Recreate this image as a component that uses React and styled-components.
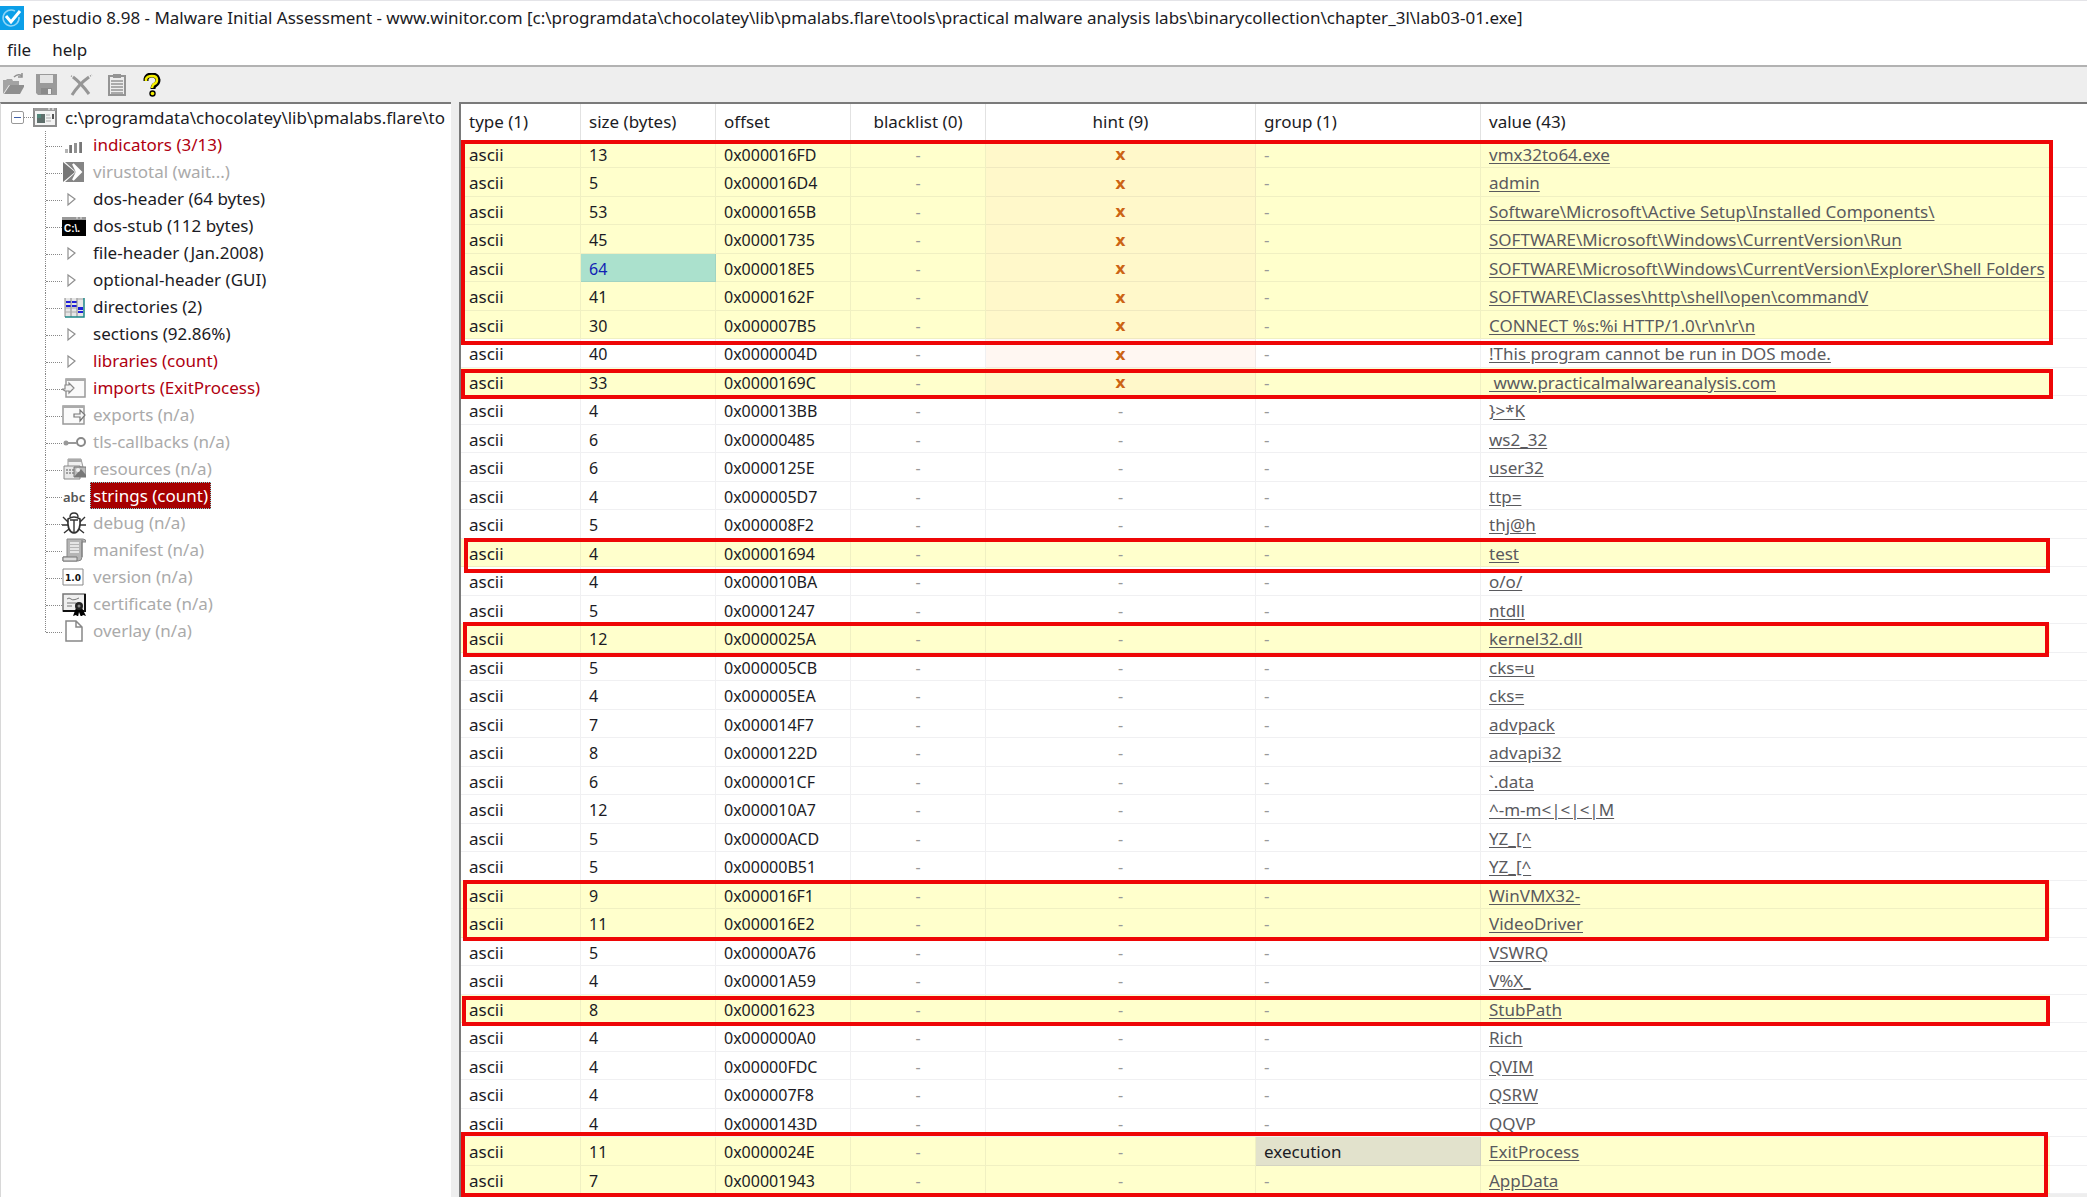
import React from "react";
import styled, { createGlobalStyle } from "styled-components";

const frames = [
  { top: 36, height: 205, left: 0, right: 34 },
  { top: 265, height: 30, left: 0, right: 34 },
  { top: 434, height: 35, left: 3, right: 37 },
  { top: 518, height: 35, left: 2, right: 38 },
  { top: 776, height: 61, left: 2, right: 38 },
  { top: 892, height: 30, left: 1, right: 37 },
  { top: 1028, height: 65, left: 0, right: 39 },
];

const columns = [
  { label: "type (1)", width: 120 },
  { label: "size (bytes)", width: 135 },
  { label: "offset", width: 135 },
  { label: "blacklist (0)", width: 135, center: true },
  { label: "hint (9)", width: 270, center: true },
  { label: "group (1)", width: 225 },
  { label: "value (43)" },
];

// size, offset, value, flags: m = marked, h = hint
const strings = [
  [13, "0x000016FD", "vmx32to64.exe", "mh"],
  [5, "0x000016D4", "admin", "mh"],
  [53, "0x0000165B", "Software\\Microsoft\\Active Setup\\Installed Components\\", "mh"],
  [45, "0x00001735", "SOFTWARE\\Microsoft\\Windows\\CurrentVersion\\Run", "mh"],
  [64, "0x000018E5", "SOFTWARE\\Microsoft\\Windows\\CurrentVersion\\Explorer\\Shell Folders", "mh"],
  [41, "0x0000162F", "SOFTWARE\\Classes\\http\\shell\\open\\commandV", "mh"],
  [30, "0x000007B5", "CONNECT %s:%i HTTP/1.0\\r\\n\\r\\n", "mh"],
  [40, "0x0000004D", "!This program cannot be run in DOS mode.", "h"],
  [33, "0x0000169C", " www.practicalmalwareanalysis.com", "mh"],
  [4, "0x000013BB", "}>*K", ""],
  [6, "0x00000485", "ws2_32", ""],
  [6, "0x0000125E", "user32", ""],
  [4, "0x000005D7", "ttp=", ""],
  [5, "0x000008F2", "thj@h", ""],
  [4, "0x00001694", "test", "m"],
  [4, "0x000010BA", "o/o/", ""],
  [5, "0x00001247", "ntdll", ""],
  [12, "0x0000025A", "kernel32.dll", "m"],
  [5, "0x000005CB", "cks=u", ""],
  [4, "0x000005EA", "cks=", ""],
  [7, "0x000014F7", "advpack", ""],
  [8, "0x0000122D", "advapi32", ""],
  [6, "0x000001CF", "`.data", ""],
  [12, "0x000010A7", "^-m-m<|<|<|M", ""],
  [5, "0x00000ACD", "YZ_[^", ""],
  [5, "0x00000B51", "YZ_[^", ""],
  [9, "0x000016F1", "WinVMX32-", "m"],
  [11, "0x000016E2", "VideoDriver", "m"],
  [5, "0x00000A76", "VSWRQ", ""],
  [4, "0x00001A59", "V%X_", ""],
  [8, "0x00001623", "StubPath", "m"],
  [4, "0x000000A0", "Rich", ""],
  [4, "0x00000FDC", "QVIM", ""],
  [4, "0x000007F8", "QSRW", ""],
  [4, "0x0000143D", "QQVP", ""],
  [11, "0x0000024E", "ExitProcess", "m", "execution"],
  [7, "0x00001943", "AppData", "m"],
];

const tree = [
  { icon: "bars", label: "indicators (3/13)", color: "#b00010" },
  { icon: "sigma", label: "virustotal (wait...)", color: "#aaaaaa" },
  { icon: "arrow", label: "dos-header (64 bytes)" },
  { icon: "console", label: "dos-stub (112 bytes)" },
  { icon: "arrow", label: "file-header (Jan.2008)" },
  { icon: "arrow", label: "optional-header (GUI)" },
  { icon: "grid", label: "directories (2)" },
  { icon: "arrow", label: "sections (92.86%)" },
  { icon: "arrow", label: "libraries (count)", color: "#b00010" },
  { icon: "imports", label: "imports (ExitProcess)", color: "#b00010" },
  { icon: "exports", label: "exports (n/a)", color: "#aaaaaa" },
  { icon: "key", label: "tls-callbacks (n/a)", color: "#aaaaaa" },
  { icon: "resources", label: "resources (n/a)", color: "#aaaaaa" },
  { icon: "abc", label: "strings (count)", selected: true },
  { icon: "bug", label: "debug (n/a)", color: "#aaaaaa" },
  { icon: "scroll", label: "manifest (n/a)", color: "#aaaaaa" },
  { icon: "version", label: "version (n/a)", color: "#aaaaaa" },
  { icon: "certificate", label: "certificate (n/a)", color: "#aaaaaa" },
  { icon: "page", label: "overlay (n/a)", color: "#aaaaaa" },
];

const drawings = {
  logo: (
    <>
      <rect width="24" height="24" fill="#0c9fe8" />
      <path d="M19 11a8 8 0 1 1-4-6" fill="none" stroke="#8fd6f8" strokeWidth="1.5" />
      <path d="M6 10l5 6L20 5" fill="none" stroke="#fff" strokeWidth="3" />
    </>
  ),
  open: (
    <>
      <path d="M3 21V7h3l1-1h5l1 2h6v4H9z" fill="#a3a3a3" />
      <path d="M4 21l6-9h15l-5 9z" fill="#8f8f8f" />
      <path d="M14 4q4-4 8-1M22 0v4h-4" fill="none" stroke="#8f8f8f" strokeWidth="1.5" />
    </>
  ),
  save: (
    <>
      <path d="M1 1h21v21H3l-2-2z" fill="#9a9a9a" />
      <path d="M5 2h13v8H5z" fill="#e4e4e4" />
      <path d="M6 15h11v6H6z" fill="#8a8a8a" />
      <path d="M13 16h3v5h-3z" fill="#eee" />
    </>
  ),
  remove: (
    <>
      <path d="M3 4q8 6 16 17" fill="none" stroke="#969696" strokeWidth="3" />
      <path d="M2 22Q9 11 19 4" fill="none" stroke="#969696" strokeWidth="3" />
      <path d="M1 3l2 1M20 3l2-1" stroke="#969696" strokeWidth="1.5" strokeDasharray="1 1" />
    </>
  ),
  clipboard: (
    <>
      <path d="M4 3h16v19H4z" fill="#ededed" stroke="#949494" strokeWidth="2" />
      <path d="M8 1h8v4H8z" fill="#949494" />
      <path d="M6 8h12M6 11h12M6 14h12M6 17h12M6 20h12" stroke="#949494" strokeWidth="1.5" />
    </>
  ),
  help: (
    <>
      <path d="M6 8V6q1-4 6-4t6 5q0 3-3 5-2 1-2 4" fill="none" stroke="#000" strokeWidth="5" />
      <circle cx="12.500" cy="20.500" r="3.200" fill="#000" />
      <path d="M6 8V6q1-3 6-3t5 4q0 3-3 4-2 2-2 4" fill="none" stroke="#f4ee00" strokeWidth="2.500" />
      <circle cx="12.500" cy="20.500" r="1.800" fill="#f4ee00" />
    </>
  ),
  window: (
    <>
      <path d="M1 3h22v17H1z" fill="#f4f4f4" stroke="#8c8c8c" strokeWidth="2" />
      <path d="M1 2h22v3H1z" fill="#9c9c9c" />
      <path d="M15 3h2m2 0h2" stroke="#fff" />
      <path d="M4 8h8v9H4z" fill="#5f6f6c" />
      <path d="M4 8h4v4H4z" fill="#52877a" />
      <path d="M13 9h4M13 12h5M13 15h5" stroke="#aaa" />
      <path d="M20 8v5" stroke="#555" strokeWidth="2" />
    </>
  ),
  bars: (
    <>
      <path d="M3 16h3v4H3zM12 13h3v7h-3z" fill="#b4b4b4" />
      <path d="M7 12h3v8H7zM12 10h3v10h-3zM17 9h3v11h-3z" fill="#929292" />
      <path d="M8 12h2v8H8zM18 9h2v11h-2z" fill="#777" />
    </>
  ),
  sigma: (
    <>
      <path d="M3 2h19v20H3l11-10z" fill="#858585" />
      <path d="M11 4l8 8-8 8 4-8z" fill="#fff" stroke="#fff" strokeWidth="2" />
      <path d="M1 2l12 10L1 22z" fill="#777" />
    </>
  ),
  arrow: <path d="M6 7l7 5-7 6z" fill="#fff" stroke="#8f8f8f" strokeWidth="1.200" />,
  console: (
    <>
      <path d="M0 3h24v19H0z" fill="#000" />
      <path d="M0 3h24v3H0z" fill="#999" />
      <path d="M14 4h2m2 0h2" stroke="#eee" />
      <text x="2" y="18" fontFamily="Liberation Sans, sans-serif" fontSize="10" fontWeight="700" fill="#fff">C:\.</text>
    </>
  ),
  grid: (
    <>
      <path d="M3 3h19v19H3z" fill="#e6e6e6" />
      <path d="M4 6h5v2H4zM4 10h5v2H4zM10 6h5v2h-5zM10 10h5v2h-5zM16 12h5v3h-5zM16 16h5v2h-5z" fill="#2020d8" />
      <path d="M3 3v19M9 3v19M15 3v19" stroke="#888" fill="none" />
      <path d="M3 13h12M3 17h12M15 4h7" stroke="#aaa" fill="none" />
      <path d="M22 3v19H3" stroke="#1e8888" strokeWidth="1.5" fill="none" />
    </>
  ),
  imports: (
    <>
      <path d="M4 3h19v18H4z" fill="#fafafa" stroke="#999" strokeWidth="1.5" />
      <path d="M4 3h19v2H4z" fill="#aaa" />
      <path d="M0 13h3v-4h4V7l5 5-5 5v-2H3z" fill="#f4f4f4" stroke="#888" strokeWidth="1.200" />
    </>
  ),
  exports: (
    <>
      <path d="M1 3h21v18H1z" fill="#fafafa" stroke="#999" strokeWidth="1.5" />
      <path d="M1 3h21v2H1z" fill="#aaa" />
      <path d="M12 11h6V7l5 5-5 6v-4h-6z" fill="#f4f4f4" stroke="#777" strokeWidth="1.200" />
    </>
  ),
  key: (
    <>
      <circle cx="19" cy="12" r="4" fill="none" stroke="#888" strokeWidth="2" />
      <path d="M2 13h13" stroke="#999" strokeWidth="2" />
      <circle cx="4" cy="13" r="2.500" fill="#999" />
    </>
  ),
  resources: (
    <>
      <path d="M6 2h13l2 8H6z" fill="#f0f0f0" stroke="#999" />
      <path d="M6 2h13v3H6z" fill="#aaa" />
      <path d="M2 9h16v13H2z" fill="#e8e8e8" stroke="#888" />
      <path d="M4 13h9M4 16h9" stroke="#888" strokeWidth="1.5" strokeDasharray="2 1" />
      <path d="M12 10h12v10H12z" fill="#bbb" stroke="#777" />
      <path d="M12 20l7-8 5 6v2z" fill="#777" />
      <circle cx="16" cy="13" r="2" fill="#eee" />
    </>
  ),
  abc: <text x="1" y="18" fontFamily="Noto Sans, sans-serif" fontSize="13" fontWeight="600" fill="#555">abc</text>,
  bug: (
    <>
      <path d="M6 8q6-4 12 0 1 13-6 14Q5 21 6 8z" fill="#fff" stroke="#333" strokeWidth="1.600" />
      <path d="M8 6q0-4 4-4t4 4M12 9v13M8 9h8M6 11L1 6M18 11l5-5M6 14H0M18 14h6M7 18l-5 4M17 18l5 4" fill="none" stroke="#333" strokeWidth="1.400" />
    </>
  ),
  scroll: (
    <>
      <path d="M5 1h16q3 0 3 3h-4v15q0 4-4 4H1v-4h4z" fill="#b5b5b5" stroke="#888" />
      <path d="M1 19h14v4H1z" fill="#ddd" stroke="#777" />
      <path d="M8 5h9M8 8h9M8 11h9M8 14h9" stroke="#f5f5f5" strokeWidth="1.500" />
      <path d="M20 2v17" stroke="#777" />
    </>
  ),
  version: (
    <>
      <path d="M1 4h20v16H1z" fill="#fff" stroke="#888" />
      <text x="3" y="16" fontFamily="DejaVu Sans, sans-serif" fontSize="9" fontWeight="700" fill="#111">1.0</text>
    </>
  ),
  certificate: (
    <>
      <path d="M1 2h22v17H1z" fill="#efefef" stroke="#777" strokeWidth="1.500" />
      <path d="M23 2v17H1" fill="none" stroke="#111" strokeWidth="2" />
      <path d="M5 7q2-2 4 0t8-1M5 11h9M5 14h5" fill="none" stroke="#777" />
      <path d="M14 16l-3 8 3-1 2 2 1-5 2 5 2-2 3 1-4-8z" fill="#000" />
      <circle cx="17" cy="14" r="4" fill="#222" />
      <circle cx="17" cy="14" r="1.500" fill="#888" />
    </>
  ),
  page: <path d="M4 2h10l6 6v14H4zM14 2v6h6" fill="#fff" stroke="#888" strokeWidth="1.500" />,
};

function Icon({ name }) {
  return (
    <Svg viewBox="0 0 24 24" width="24" height="24" aria-hidden="true">
      {drawings[name]}
    </Svg>
  );
}

function StringRow({ data }) {
  const [size, offset, value, flags, group] = data;
  const marked = flags.includes("m");
  const hint = flags.includes("h");
  return (
    <Row $marked={marked}>
      <Cell>ascii</Cell>
      <Cell $small $bg={size === 64 ? "#abe1cd" : null} $color={size === 64 ? "#1022b4" : null}>{size}</Cell>
      <Cell $small>{offset}</Cell>
      <Cell $small $center $color="#999">-</Cell>
      <Cell $small $center $color="#999" $bg={hint ? (marked ? "#fff8ca" : "#fff7f2") : null}>
        {hint ? <Hint>x</Hint> : "-"}
      </Cell>
      <Cell $color={group ? null : "#999"} $bg={group ? "#e2e2cc" : null}>{group || "-"}</Cell>
      <Cell><Value href="#value">{value}</Value></Cell>
      <Rest />
    </Row>
  );
}

export default function App() {
  return (
    <Window>
      <Global />
      <TitleBar>
        <Icon name="logo" />
        <Title>
          pestudio 8.98 - Malware Initial Assessment - www.winitor.com [c:\programdata\chocolatey\lib\pmalabs.flare\tools\practical malware analysis labs\binarycollection\chapter_3l\lab03-01.exe]
        </Title>
      </TitleBar>
      <Menu>
        <MenuButton>file</MenuButton>
        <MenuButton>help</MenuButton>
      </Menu>
      <Toolbar>
        {["open", "save", "remove", "clipboard", "help"].map((name) => (
          <ToolButton key={name} aria-label={name}>
            <Icon name={name} />
          </ToolButton>
        ))}
      </Toolbar>
      <Split>
        <Sidebar>
          <Root>
            <Toggle aria-label="collapse" />
            <Dots />
            <Icon name="window" />
            <RootLabel>c:\programdata\chocolatey\lib\pmalabs.flare\to</RootLabel>
          </Root>
          <Tree>
            {tree.map((item) => (
              <Item key={item.label}>
                <Elbow />
                <Icon name={item.icon} />
                <Label $color={item.color} $selected={item.selected}>{item.label}</Label>
              </Item>
            ))}
          </Tree>
        </Sidebar>
        <Pane>
          <Table>
            <colgroup>
              {columns.map((c) => (
                <Col key={c.label} $width={c.width} />
              ))}
              <Col $width={37} />
            </colgroup>
            <thead>
              <tr>
                {columns.map((c) => (
                  <Head key={c.label} $center={c.center} $last={!c.width}>{c.label}</Head>
                ))}
                <Head $last />
              </tr>
            </thead>
            <tbody>
              {strings.map((data) => (
                <StringRow key={data[1]} data={data} />
              ))}
            </tbody>
          </Table>
          {frames.map((f) => (
            <Frame key={f.top} $top={f.top} $height={f.height} $left={f.left} $right={f.right} />
          ))}
        </Pane>
      </Split>
    </Window>
  );
}

const Global = createGlobalStyle`
  * {
    box-sizing: border-box;
  }
  body {
    margin: 0;
    background: #eeeeee;
    color: #1b1b24;
    font: 17px/20px "Noto Sans", "Open Sans", sans-serif;
  }
  button {
    font: inherit;
    color: inherit;
    border: 0;
    padding: 0;
    background: none;
    white-space: nowrap;
  }
`;
const Window = styled.div`
  display: flex;
  flex-direction: column;
  min-height: 100vh;
`;
const Svg = styled.svg`
  display: block;
  flex: none;
`;
const TitleBar = styled.header`
  display: flex;
  align-items: center;
  gap: 8px;
  height: 35px;
  border-top: 1px solid #e4e4e8;
  background: #fff;
`;
const Title = styled.h1`
  margin: 0;
  font-size: 17px;
  font-weight: 400;
  white-space: nowrap;
`;
const Menu = styled.nav`
  display: flex;
  gap: 21px;
  height: 30px;
  padding: 0 7px;
  background: #fff;
`;
const MenuButton = styled.button`
  height: 30px;
`;
const Toolbar = styled.div`
  display: flex;
  align-items: center;
  gap: 11px;
  height: 37px;
  border-top: 2px solid #b2b2b2;
`;
const ToolButton = styled.button`
  width: 24px;
  height: 24px;
`;
const Split = styled.main`
  display: flex;
  flex: 1;
  gap: 8px;
`;
const Sidebar = styled.aside`
  flex: none;
  width: 451px;
  padding-right: 2px;
  border-top: 2px solid #7a7a7a;
  border-left: 1px solid #d8d8d8;
  background: #fff;
`;
const Root = styled.div`
  display: flex;
  align-items: center;
  height: 27px;
  padding-left: 10px;
  overflow: hidden;
`;
const Toggle = styled.button`
  display: grid;
  place-items: center;
  flex: none;
  width: 13px;
  height: 13px;
  && {
    border: 1px solid #999;
    border-radius: 2px;
  }
  &::before {
    content: "";
    width: 7px;
    height: 1px;
    background: #3f5fa8;
  }
`;
const Dots = styled.span`
  flex: none;
  width: 9px;
  border-top: 1px dotted #888;
`;
const RootLabel = styled.span`
  padding-left: 8px;
  white-space: nowrap;
`;
const Tree = styled.ul`
  margin: 0;
  padding: 0 0 0 44px;
  list-style: none;
`;
const Elbow = styled.span`
  width: 17px;
  height: 27px;
  border-left: 1px dotted #888;
  &::before {
    content: "";
    display: block;
    height: 15px;
    border-bottom: 1px dotted #888;
  }
`;
const Item = styled.li`
  display: flex;
  align-items: center;
  height: 27px;
  &:last-child ${Elbow} {
    height: 15px;
    margin-bottom: 12px;
  }
`;
const Label = styled.button`
  && {
    height: 27px;
    margin-left: 4px;
    padding: 0 2px;
    border: 1px dotted ${(p) => (p.$selected ? "#7fd4d4" : "transparent")};
    background: ${(p) => (p.$selected ? "#a60000" : "none")};
    color: ${(p) => (p.$selected ? "#fff" : p.$color || "#1b1b24")};
  }
`;
const Pane = styled.section`
  position: relative;
  flex: 1;
  min-width: 0;
  border-top: 2px solid #7a7a7a;
  border-left: 2px solid #7a7a7a;
`;
const Table = styled.table`
  width: 100%;
  table-layout: fixed;
  border-collapse: separate;
  border-spacing: 0;
  background: #fff;
`;
const Col = styled.col`
  width: ${(p) => (p.$width ? `${p.$width}px` : "auto")};
`;
const Head = styled.th`
  height: 36px;
  padding: 0 8px;
  border-right: ${(p) => (p.$last ? "0" : "1px solid #e2e2e2")};
  font-weight: 400;
  text-align: ${(p) => (p.$center ? "center" : "left")};
`;
const Cell = styled.td`
  padding: 2px 8px 0;
  border-right: 1px solid rgba(0, 0, 40, 0.06);
  border-bottom: 1px solid rgba(0, 0, 40, 0.06);
  color: ${(p) => p.$color || "inherit"};
  font-size: ${(p) => (p.$small ? "16px" : "17px")};
  text-align: ${(p) => (p.$center ? "center" : "left")};
  white-space: pre;
  &&& {
    background: ${(p) => p.$bg};
  }
  &:nth-child(7) {
    border-right: 0;
  }
`;
const Row = styled.tr`
  height: 28px;
  &:nth-child(even) {
    height: 29px;
  }
  ${Cell} {
    background: ${(p) => (p.$marked ? "#ffffcc" : "#fff")};
  }
`;
const Rest = styled.td`
  padding: 0;
  border-bottom: 1px solid rgba(0, 0, 40, 0.06);
`;
const Hint = styled.b`
  color: #cc6414;
  font-family: "DejaVu Sans", sans-serif;
`;
const Value = styled.a`
  color: #5a5a5e;
  text-decoration: underline;
  text-underline-offset: 2px;
`;
// red marker drawn over the rows of interest
const Frame = styled.div`
  position: absolute;
  top: ${(p) => p.$top}px;
  left: ${(p) => p.$left}px;
  right: ${(p) => p.$right}px;
  height: ${(p) => p.$height}px;
  border: 4px solid #ee0606;
  pointer-events: none;
`;
